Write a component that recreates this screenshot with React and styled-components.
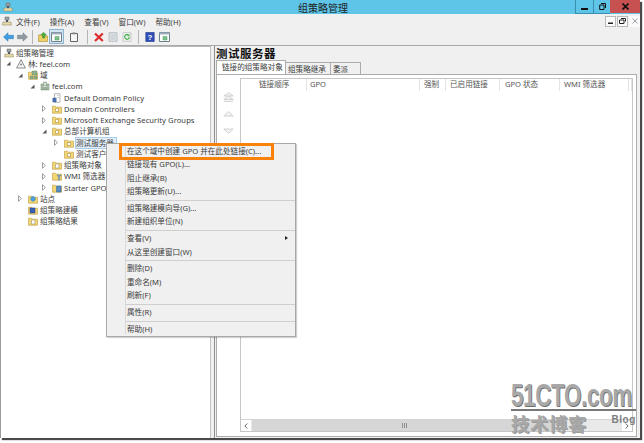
import React from 'react';
import styled, { createGlobalStyle } from 'styled-components';

const GlobalStyle = createGlobalStyle`
  html, body {
    margin: 0;
    padding: 0;
    background: #ffffff;
  }
  body {
    width: 644px;
    height: 443px;
    overflow: hidden;
    font-family: "Noto Sans", "Noto Sans CJK SC", sans-serif;
    font-size: 7.6px;
    color: #3c3c3c;
  }
`;

const Window = styled.div`
  position: relative;
  width: 640px;
  height: 438px;
  display: flex;
  flex-direction: column;
  background: #f0f0f0;
  box-shadow: 2px 2px 1px #4a4a4a;
`;

const TitleBar = styled.div`
  height: 14px;
  flex: none;
  display: flex;
  align-items: center;
  background: #5ec5e8;
`;

const TitleIcon = styled.div`
  width: 14px;
  padding-left: 3px;
  display: flex;
`;

const TitleText = styled.div`
  flex: 1;
  text-align: center;
  padding-left: 54px;
  font-size: 10px;
  color: #222;
`;

const CaptionButton = styled.div`
  width: ${(p) => p.$w}px;
  height: 13px;
  align-self: flex-start;
  display: flex;
  align-items: center;
  justify-content: center;
  background: ${(p) => (p.$close ? '#c75050' : 'transparent')};
  border-left: ${(p) => (p.$close ? 'none' : '1px solid #3b8fae')};
  border-bottom: ${(p) => (p.$close ? 'none' : '1px solid #3b8fae')};
`;

const MenuBar = styled.div`
  height: 14px;
  flex: none;
  display: flex;
  align-items: center;
  padding-left: 2px;
  background: #f0f0f0;
`;

const MenuLabel = styled.span`
  margin-left: ${(p) => p.$gap}px;
  white-space: nowrap;
`;

const MdiButtons = styled.div`
  margin-left: auto;
  display: flex;
  gap: 1px;
`;

const MdiButton = styled.div`
  width: 11px;
  height: 11px;
  display: flex;
  align-items: center;
  justify-content: center;
  background: #fafafa;
  border: ${(p) => (p.$off ? 'none' : '1px solid #b9b9b9')};
  box-sizing: border-box;
`;

const Toolbar = styled.div`
  height: 18px;
  flex: none;
  display: flex;
  align-items: center;
  padding-left: 3px;
  background: #f0f0f0;
  border-bottom: 1px solid #a8a8a8;
  box-sizing: border-box;
`;

const ToolSlot = styled.div`
  width: ${(p) => p.$w || 14}px;
  height: 15px;
  padding-left: ${(p) => p.$pad || 0}px;
  display: flex;
  align-items: center;
  justify-content: center;
  box-sizing: border-box;
  background: ${(p) => (p.$active ? '#d5e6f3' : 'transparent')};
  border: ${(p) => (p.$active ? '1px solid #8fb4d3' : 'none')};
`;

const ToolSep = styled.div`
  width: 1px;
  height: 14px;
  margin: 0 ${(p) => p.$m || 5}px;
  background: #b5b5b5;
`;

const Body = styled.div`
  flex: 1;
  min-height: 0;
  display: flex;
  border-left: 1px solid #9c9c9c;
`;

const TreePane = styled.div`
  width: 209px;
  flex: none;
  background: #ffffff;
  border-top: 1px solid #b8b8b8;
  border-right: 1px solid #c4c4c4;
`;

const TreeRow = styled.div`
  height: 11.25px;
  display: flex;
  align-items: center;
  padding-left: ${(p) => 3 + p.$level * 12}px;
  white-space: nowrap;
`;

const Expander = styled.span`
  width: 6px;
  height: 8px;
  margin-left: -11px;
  margin-right: 5px;
  display: flex;
  align-items: center;
  justify-content: center;
`;

const NodeIcon = styled.span`
  width: 10px;
  height: 10px;
  flex: none;
  display: flex;
  margin-right: 2px;
`;

const NodeLabel = styled.span`
  line-height: 10px;
  letter-spacing: ${(p) => (p.$latin ? 0.06 : 0)}px;
  padding-right: ${(p) => (p.$selected ? 2 : 0)}px;
  background: ${(p) => (p.$selected ? '#e2effa' : 'transparent')};
  box-shadow: ${(p) => (p.$selected ? '0 0 0 1px #a9cdec' : 'none')};
`;

const Splitter = styled.div`
  width: 3px;
  flex: none;
  background: #f0f0f0;
`;

const DetailPane = styled.div`
  flex: 1;
  min-width: 0;
  display: flex;
  flex-direction: column;
  border-left: 1px solid #8f8f8f;
  padding: 1px 3px 0 1px;
`;

const DetailTitle = styled.div`
  height: 15px;
  line-height: 14px;
  font-size: 11.5px;
  font-weight: 700;
  letter-spacing: 0.5px;
  color: #111;
`;

const TabStrip = styled.div`
  display: flex;
  height: 12px;
  flex: none;
  align-items: flex-end;
`;

const Tab = styled.div`
  height: ${(p) => (p.$active ? 14 : 12)}px;
  width: ${(p) => p.$w}px;
  padding-left: ${(p) => (p.$active ? 5 : 2)}px;
  box-sizing: border-box;
  background: ${(p) => (p.$active ? '#ffffff' : '#f0f0f0')};
  border: 1px solid #acacac;
  border-left-width: ${(p) => (p.$active ? 1 : 0)}px;
  border-bottom: none;
  line-height: 12px;
  white-space: nowrap;
  position: relative;
  z-index: ${(p) => (p.$active ? 1 : 0)};
`;

const TabPanel = styled.div`
  flex: 1;
  min-height: 0;
  display: flex;
  background: #ffffff;
  border: 1px solid #acacac;
  margin-bottom: 1px;
  padding: 3px 3px 4px 0;
`;

const OrderButtons = styled.div`
  width: 23px;
  flex: none;
  display: flex;
  flex-direction: column;
  align-items: center;
  padding-top: 14px;
  gap: 7px;
`;

const ListView = styled.div`
  flex: 1;
  min-width: 0;
  display: flex;
  flex-direction: column;
  border: 1px solid #c6c6c6;
`;

const ListHeader = styled.div`
  display: grid;
  grid-template-columns: 66px 113px 26px 54px 60px 69px 1fr;
  height: 12px;
  line-height: 11px;
`;

const ListColumn = styled.div`
  border-right: 1px solid #e3e3e3;
  padding-left: ${(p) => p.$pad}px;
  color: #555;
  white-space: nowrap;
  overflow: hidden;
`;

const HScrollBar = styled.div`
  margin-top: auto;
  height: 12px;
  display: flex;
  background: #e9e9e9;
  border-top: 1px solid #d4d4d4;
  box-sizing: border-box;
`;

const ScrollButton = styled.div`
  width: 10px;
  flex: none;
  margin-left: ${(p) => (p.$end ? 'auto' : 0)};
  background: #ffffff;
  display: flex;
  align-items: center;
  justify-content: center;
`;

const ScrollThumb = styled.div`
  width: ${(p) => p.$w}px;
  margin-left: 1px;
  background: #d6d6d6;
  display: flex;
  align-items: center;
  justify-content: center;
`;

const ScrollGrip = styled.div`
  width: 5px;
  height: 5px;
  background: repeating-linear-gradient(to right, #8f8f8f 0 1px, #d6d6d6 1px 2px);
`;

const ContextMenu = styled.div`
  position: absolute;
  left: 106px;
  top: 143px;
  width: 190px;
  padding-top: 1px;
  box-sizing: border-box;
  background: #f0f0f0;
  border: 1px solid #a8a8a8;
  box-shadow: 1px 1px 1px rgba(0, 0, 0, 0.18);
  z-index: 5;
`;

const MenuGutter = styled.div`
  position: absolute;
  left: 18px;
  top: 2px;
  bottom: 2px;
  width: 1px;
  background: #d9d9d9;
`;

const MenuEntry = styled.div`
  height: 13.45px;
  line-height: 13.45px;
  padding-left: 20px;
  position: relative;
  white-space: nowrap;
`;

const SubmenuArrow = styled.span`
  position: absolute;
  right: 7px;
  top: 4px;
  width: 0;
  height: 0;
  border-left: 3px solid #222;
  border-top: 2.5px solid transparent;
  border-bottom: 2.5px solid transparent;
`;

const MenuSeparator = styled.div`
  height: 3.3px;
  display: flex;
  align-items: center;
  margin-left: 18px;
  &::after {
    content: '';
    flex: 1;
    height: 1px;
    background: #cfcfcf;
  }
`;

const Callout = styled.div`
  position: absolute;
  left: 12px;
  top: -1px;
  width: 155px;
  height: 17px;
  box-sizing: border-box;
  border: 3px solid #fa8209;
  z-index: 6;
`;

const Watermark = styled.div`
  position: absolute;
  left: 511px;
  top: 380px;
  width: 125px;
  z-index: 4;
  color: #a8a8a8;
`;

const WatermarkLogo = styled.div`
  position: relative;
  height: 29px;
  line-height: 30px;
  font-family: "Liberation Sans", sans-serif;
  font-size: 32px;
  font-weight: 700;
  letter-spacing: -0.5px;
  white-space: nowrap;
  transform: scaleX(0.7);
  transform-origin: left center;
  text-shadow: 1px 1px 0 #707070;
`;

const WatermarkRule = styled.div`
  position: relative;
  height: 2px;
  background: #777;
`;

const WatermarkFoot = styled.div`
  position: relative;
  display: flex;
  justify-content: space-between;
  padding-top: 3px;
`;

const WatermarkCn = styled.span`
  font-size: 18.5px;
  line-height: 20px;
  font-weight: 700;
  letter-spacing: 0.5px;
  text-shadow: 1px 1px 0 #9a9a9a;
`;

const WatermarkBlog = styled.span`
  font-family: "Liberation Sans", sans-serif;
  font-size: 10px;
  line-height: 12px;
  font-weight: 700;
  color: #7e7e7e;
  letter-spacing: 0.6px;
`;

const Svg = ({ size = 10, children }) => (
  <svg width={size} height={size} viewBox="0 0 10 10" style={{ display: 'block' }}>
    {children}
  </svg>
);

const ConsoleIcon = ({ size }) => (
  <Svg size={size}>
    <path d="M3 1h4v3H3z" fill="#9aa2a8" stroke="#666" strokeWidth=".5" />
    <path d="M1 6h8l.5 3H.5z" fill="#e6d9a8" stroke="#8a7d55" strokeWidth=".5" />
    <path d="M4 4v2h2V4" fill="#556" />
  </Svg>
);

const ForestIcon = () => (
  <Svg>
    <path d="M5 .7 9.4 9H.6z" fill="#f5f5f5" stroke="#6f6f6f" strokeWidth=".8" />
    <circle cx="5" cy="5.5" r="1.1" fill="#8a8a8a" />
  </Svg>
);

const FolderIcon = ({ badge }) => (
  <Svg>
    <path d="M.5 2.2h3l1 1h5v6h-9z" fill="#f4d675" stroke="#b89a3e" strokeWidth=".6" />
    {badge === 'doc' && <path d="M3.5 4h3.4v4H3.5z" fill="#fff" stroke="#8a8a6a" strokeWidth=".5" />}
    {badge === 'net' && <path d="M4 1h5v4H4zM2 6h3v3H2zM6 6h3v3H6z" fill="#8fb08c" stroke="#5f7f60" strokeWidth=".4" />}
    {badge === 'starter' && <path d="M4.5 3h4.5v6H4.5z" fill="#5a8fc4" stroke="#2f5f90" strokeWidth=".5" />}
    {badge === 'filter' && <path d="M5 4h4L7.6 6v3H6.4V6z" fill="#7fa7c9" stroke="#4f7797" strokeWidth=".4" />}
    {badge === 'model' && <path d="M2 3h5v5H2z" fill="#3b62b5" stroke="#22407f" strokeWidth=".5" />}
    {badge === 'site' && <path d="M5 2.5a2.4 2.4 0 1 0 .01 0z" fill="#49a0dc" stroke="#2a6f9f" strokeWidth=".4" />}
    {badge === 'ou' && <path d="M3.5 4.5h3v3h-3z" fill="#fff" stroke="#a88a36" strokeWidth=".6" />}
  </Svg>
);

const DomainIcon = () => (
  <Svg>
    <path d="M1 3h2v6H1zM7 3h2v6H7z" fill="#b5c7ae" stroke="#66806a" strokeWidth=".5" />
    <path d="M3.5 1h3v4h-3z" fill="#d0dccb" stroke="#66806a" strokeWidth=".5" />
    <path d="M3.5 6.5h3v2.5h-3z" fill="#9db59a" stroke="#66806a" strokeWidth=".5" />
  </Svg>
);

const GpoIcon = () => (
  <Svg>
    <path d="M2.5.7h5.5v8.6H2.5z" fill="#fff" stroke="#8a8a8a" strokeWidth=".6" />
    <path d="M.8 5h3.4v4H.8z" fill="#4a73b8" stroke="#2f4f88" strokeWidth=".4" />
    <path d="M5 2.5h2M5 4.5h2" stroke="#b0b0b0" strokeWidth=".6" />
  </Svg>
);

const ArrowOpen = () => (
  <svg width="5" height="5" viewBox="0 0 5 5" style={{ display: 'block' }}>
    <path d="M4.5.5v4h-4z" fill="#555" />
  </svg>
);

const ArrowClosed = () => (
  <svg width="4" height="7" viewBox="0 0 4 7" style={{ display: 'block' }}>
    <path d="M.5.7 3.4 3.5.5 6.3z" fill="#fff" stroke="#777" strokeWidth=".7" />
  </svg>
);

const NavArrow = ({ active, flip }) => (
  <svg width="11" height="10" viewBox="0 0 11 10" style={{ display: 'block', transform: flip ? 'scaleX(-1)' : 'none' }}>
    <path
      d="M.5 5 5 .8v2.5h5.5v3.4H5v2.5z"
      fill={active ? '#3f9fe0' : '#8f9aa2'}
      stroke={active ? '#2a78b4' : '#70787e'}
      strokeWidth=".5"
    />
  </svg>
);

const UpFolderIcon = () => (
  <Svg>
    <path d="M.5 3h3.5l1 1h4.5v5.500h-9z" fill="#efcf66" stroke="#a98a30" strokeWidth=".6" />
    <path d="M5.500.3 8.500 3H6.800v3H4.500V3H2.800z" fill="#4fae3a" stroke="#2c7c20" strokeWidth=".4" />
  </Svg>
);

const PaneIcon = () => (
  <svg width="11" height="10" viewBox="0 0 11 10" style={{ display: 'block' }}>
    <path d="M.5.5h10v9H.5z" fill="#fff" stroke="#6f7f8a" />
    <path d="M.5.5h10v2H.5z" fill="#9fb0bc" />
    <path d="M4 4.500h4v3.500H4z" fill="#7cc48a" stroke="#4b9a5e" strokeWidth=".5" />
  </svg>
);

const ClipboardIcon = () => (
  <Svg>
    <path d="M1.500 1.500h7v8h-7z" fill="#f7f7f7" stroke="#555" strokeWidth=".9" />
    <path d="M3.500.4h3v2h-3z" fill="#8a8a8a" />
  </Svg>
);

const DeleteIcon = () => (
  <Svg>
    <path d="M1 1.500 8.800 9M8.800 1.500 1 9" stroke="#dd2c2c" strokeWidth="2.200" />
  </Svg>
);

const PropsIcon = () => (
  <Svg>
    <path d="M1 .7h8v8.600H1z" fill="#dfe5e9" stroke="#a4adb3" strokeWidth=".7" />
    <path d="M2.500 3h5M2.500 5h5M2.500 7h5" stroke="#b4bcc2" strokeWidth=".7" />
  </Svg>
);

const RefreshIcon = () => (
  <Svg>
    <path d="M1 .7h8v8.600H1z" fill="#f2f4f2" stroke="#b4bab4" strokeWidth=".7" />
    <path d="M7.300 5a2.300 2.300 0 1 1-.8-1.800" fill="none" stroke="#3fae49" strokeWidth="1.200" />
    <path d="M7.500 1.800v2.400H5.200z" fill="#3fae49" />
  </Svg>
);

const HelpIcon = () => (
  <Svg>
    <path d="M.8.4h8.400v9.200H.8z" fill="#2f4fb8" stroke="#1d3484" strokeWidth=".6" />
    <text x="5" y="8" fontSize="8" fontWeight="700" textAnchor="middle" fill="#fff" fontFamily="Liberation Sans">?</text>
  </Svg>
);

const MoveArrows = ({ up = true, double = false }) => (
  <svg width="11" height="10" viewBox="0 0 11 10" style={{ display: 'block', transform: up ? 'none' : 'rotate(180deg)' }}>
    {double && <path d="M.8 4 5.500.7 10.200 4z" fill="#f4f4f4" stroke="#c6c6c6" strokeWidth=".8" />}
    <path d={double ? 'M.8 7.500 5.500 4.200l4.700 3.300z' : 'M.8 7 5.500 2.500 10.200 7z'} fill="#f4f4f4" stroke="#c6c6c6" strokeWidth=".8" />
    {double && <path d="M1 9.300h9" stroke="#c6c6c6" strokeWidth=".9" />}
  </svg>
);

const ScrollChevron = ({ right }) => (
  <svg width="4" height="6" viewBox="0 0 4 6" style={{ display: 'block', transform: right ? 'scaleX(-1)' : 'none' }}>
    <path d="M3.300.5.900 3l2.400 2.500" fill="none" stroke="#666" strokeWidth="1" />
  </svg>
);

const treeNodes = [
  { level: 0, icon: <ConsoleIcon />, label: '组策略管理' },
  { level: 1, exp: 'open', icon: <ForestIcon />, label: '林: feel.com' },
  { level: 2, exp: 'open', icon: <FolderIcon badge="net" />, label: '域' },
  { level: 3, exp: 'open', icon: <DomainIcon />, label: 'feel.com' },
  { level: 4, icon: <GpoIcon />, label: 'Default Domain Policy', latin: true },
  { level: 4, exp: 'closed', icon: <FolderIcon badge="ou" />, label: 'Domain Controllers', latin: true },
  { level: 4, exp: 'closed', icon: <FolderIcon badge="ou" />, label: 'Microsoft Exchange Security Groups', latin: true },
  { level: 4, exp: 'open', icon: <FolderIcon badge="ou" />, label: '总部计算机组' },
  { level: 5, exp: 'closed', icon: <FolderIcon badge="ou" />, label: '测试服务器', selected: true },
  { level: 5, icon: <FolderIcon badge="ou" />, label: '测试客户端' },
  { level: 4, exp: 'closed', icon: <FolderIcon badge="doc" />, label: '组策略对象' },
  { level: 4, exp: 'closed', icon: <FolderIcon badge="filter" />, label: 'WMI 筛选器' },
  { level: 4, exp: 'closed', icon: <FolderIcon badge="starter" />, label: 'Starter GPO' },
  { level: 2, exp: 'closed', icon: <FolderIcon badge="site" />, label: '站点' },
  { level: 2, icon: <FolderIcon badge="model" />, label: '组策略建模' },
  { level: 2, icon: <FolderIcon badge="doc" />, label: '组策略结果' },
];

const menuGroups = [
  ['在这个域中创建 GPO 并在此处链接(C)...', '链接现有 GPO(L)...', '阻止继承(B)', '组策略更新(U)...'],
  ['组策略建模向导(G)...', '新建组织单位(N)'],
  ['查看(V)', '从这里创建窗口(W)'],
  ['删除(D)', '重命名(M)', '刷新(F)'],
  ['属性(R)'],
  ['帮助(H)'],
];

const columns = [
  { label: '链接顺序', pad: 18 },
  { label: 'GPO', pad: 3 },
  { label: '强制', pad: 4 },
  { label: '已启用链接', pad: 4 },
  { label: 'GPO 状态', pad: 5 },
  { label: 'WMI 筛选器', pad: 4 },
  { label: '', pad: 0 },
];

const App = () => {
  return (
    <>
      <GlobalStyle />
      <Window>
        <TitleBar>
          <TitleIcon>
            <ConsoleIcon />
          </TitleIcon>
          <TitleText>组策略管理</TitleText>
          <CaptionButton $w={17}>
            <svg width="7" height="7" viewBox="0 0 7 7"><path d="M0 5h7v2H0z" fill="#111" /></svg>
          </CaptionButton>
          <CaptionButton $w={16}>
            <svg width="7" height="7" viewBox="0 0 7 7"><path d="M2 .5h4.500V5M.7 2h4.300v4.500H.7z" fill="none" stroke="#111" /></svg>
          </CaptionButton>
          <CaptionButton $w={30} $close>
            <svg width="7" height="7" viewBox="0 0 7 7"><path d="M.5.500 6.500 6.500M6.500.500.5 6.500" stroke="#111" strokeWidth="1.600" /></svg>
          </CaptionButton>
        </TitleBar>

        <MenuBar>
          <ConsoleIcon />
          <MenuLabel $gap={4}>文件(F)</MenuLabel>
          <MenuLabel $gap={10}>操作(A)</MenuLabel>
          <MenuLabel $gap={10}>查看(V)</MenuLabel>
          <MenuLabel $gap={10}>窗口(W)</MenuLabel>
          <MenuLabel $gap={10}>帮助(H)</MenuLabel>
          <MdiButtons>
            <MdiButton>
              <svg width="5" height="5" viewBox="0 0 5 5"><path d="M0 3.500h5V5H0z" fill="#222" /></svg>
            </MdiButton>
            <MdiButton>
              <svg width="7" height="6" viewBox="0 0 7 6"><path d="M2 .5h4.500v3M.5 2h4.500v3.500H.5z" fill="none" stroke="#222" /></svg>
            </MdiButton>
            <MdiButton $off>
              <svg width="6" height="6" viewBox="0 0 6 6"><path d="M.5.500 5.500 5.500M5.500.500.5 5.500" stroke="#9aa4ac" /></svg>
            </MdiButton>
          </MdiButtons>
        </MenuBar>

        <Toolbar>
          <ToolSlot $w={11}><NavArrow active /></ToolSlot>
          <ToolSlot $w={14} $pad={3}><NavArrow flip /></ToolSlot>
          <ToolSep $m={4} />
          <ToolSlot $w={12}><UpFolderIcon /></ToolSlot>
          <ToolSlot $w={15} $active><PaneIcon /></ToolSlot>
          <ToolSlot $w={20}><ClipboardIcon /></ToolSlot>
          <ToolSep $m={3} />
          <ToolSlot $w={15}><DeleteIcon /></ToolSlot>
          <ToolSlot $w={14}><PropsIcon /></ToolSlot>
          <ToolSlot $w={14}><RefreshIcon /></ToolSlot>
          <ToolSep $m={4} />
          <ToolSlot $w={14}><HelpIcon /></ToolSlot>
          <ToolSlot $w={14}><PaneIcon /></ToolSlot>
        </Toolbar>

        <Body>
          <TreePane>
            {treeNodes.map((node) => (
              <TreeRow key={node.label} $level={node.level}>
                {node.level > 0 && (
                  <Expander>
                    {node.exp === 'open' && <ArrowOpen />}
                    {node.exp === 'closed' && <ArrowClosed />}
                  </Expander>
                )}
                <NodeIcon>{node.icon}</NodeIcon>
                <NodeLabel $selected={node.selected} $latin={node.latin}>{node.label}</NodeLabel>
              </TreeRow>
            ))}
          </TreePane>
          <Splitter />
          <DetailPane>
            <DetailTitle>测试服务器</DetailTitle>
            <TabStrip>
              <Tab $active $w={70}>链接的组策略对象</Tab>
              <Tab $w={45}>组策略继承</Tab>
              <Tab $w={30}>委派</Tab>
            </TabStrip>
            <TabPanel>
              <OrderButtons>
                <MoveArrows double />
                <MoveArrows />
                <MoveArrows up={false} />
              </OrderButtons>
              <ListView>
                <ListHeader>
                  {columns.map((col) => (
                    <ListColumn key={col.label} $pad={col.pad}>{col.label}</ListColumn>
                  ))}
                </ListHeader>
                <HScrollBar>
                  <ScrollButton><ScrollChevron /></ScrollButton>
                  <ScrollThumb $w={304}><ScrollGrip /></ScrollThumb>
                  <ScrollButton $end><ScrollChevron right /></ScrollButton>
                </HScrollBar>
              </ListView>
            </TabPanel>
          </DetailPane>
        </Body>

        <ContextMenu>
          <MenuGutter />
          <Callout />
          {menuGroups.map((group, i) => (
            <React.Fragment key={group[0]}>
              {i > 0 && <MenuSeparator />}
              {group.map((item) => (
                <MenuEntry key={item}>
                  {item}
                  {item === '查看(V)' && <SubmenuArrow />}
                </MenuEntry>
              ))}
            </React.Fragment>
          ))}
        </ContextMenu>

        <Watermark>
          <WatermarkLogo>51CTO.com</WatermarkLogo>
          <WatermarkRule />
          <WatermarkFoot>
            <WatermarkCn>技术博客</WatermarkCn>
            <WatermarkBlog>Blog</WatermarkBlog>
          </WatermarkFoot>
        </Watermark>
      </Window>
    </>
  );
};

export default App;
